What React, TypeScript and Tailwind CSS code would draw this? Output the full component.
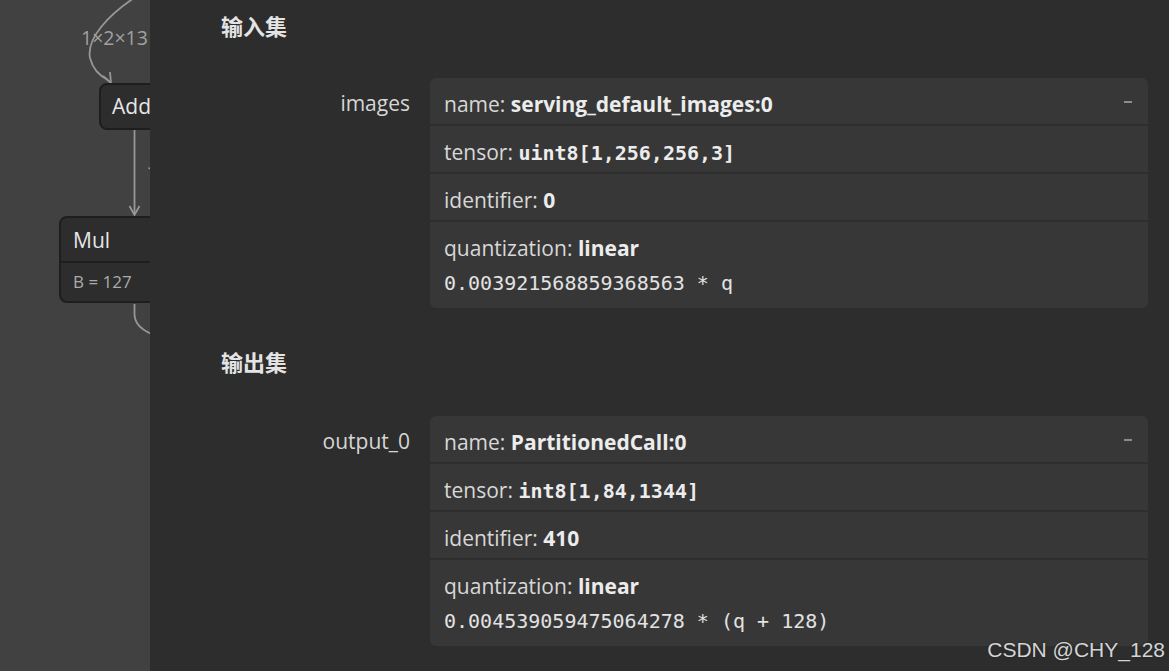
const sans = { fontFamily: '"Open Sans", "Noto Sans", sans-serif' };
const mono = { fontFamily: '"DejaVu Sans Mono", "Liberation Mono", monospace' };
const cjk = { fontFamily: '"Noto Sans CJK SC", sans-serif' };

type Row = { key: string; value: string; mono?: boolean; extra?: string };

const inputs: Row[] = [
  { key: 'name', value: 'serving_default_images:0' },
  { key: 'tensor', value: 'uint8[1,256,256,3]', mono: true },
  { key: 'identifier', value: '0' },
  { key: 'quantization', value: 'linear', extra: '0.003921568859368563 * q' },
];

const outputs: Row[] = [
  { key: 'name', value: 'PartitionedCall:0' },
  { key: 'tensor', value: 'int8[1,84,1344]', mono: true },
  { key: 'identifier', value: '410' },
  { key: 'quantization', value: 'linear', extra: '0.004539059475064278 * (q + 128)' },
];

function Card({ label, rows }: { label: string; rows: Row[] }) {
  return (
    <div className="flex">
      <div className="w-[189px] shrink-0 pt-[13px] text-right text-[21px] leading-6 text-[#d6d6d6]">{label}</div>
      <div className="relative ml-5 flex-1 overflow-hidden rounded-[6px] bg-[#373737]">
        {/* collapse toggle */}
        <span className="absolute right-4 top-[23px] h-[2px] w-[8px] bg-[#8c8c8c]" />
        {rows.map((r, i) => (
          <div
            key={r.key}
            className={`px-[14px] pt-[14px] ${i < rows.length - 1 ? 'h-[48px] border-b-2 border-[#2e2e2e]' : 'h-[86px]'}`}
          >
            <div className="text-[21px] leading-6 text-[#d8d8d8]">
              {r.key}:{' '}
              <span
                className={`font-bold text-[#ececec] ${r.mono ? 'text-[20px]' : ''}`}
                style={r.mono ? mono : undefined}
              >
                {r.value}
              </span>
            </div>
            {r.extra && (
              <div className="mt-2 text-[20px] leading-[30px] text-[#e2e2e2]" style={mono}>
                {r.extra}
              </div>
            )}
          </div>
        ))}
      </div>
    </div>
  );
}

function Graph() {
  return (
    <div className="relative h-full w-[150px] shrink-0 overflow-hidden bg-[#414141]">
      <svg className="absolute left-0 top-0" width="150" height="671">
        <g fill="none" stroke="#979797" strokeWidth="1.8">
          <path d="M134 -2 C110 14 86 38 90 58 C93 70 100 76 108 80" />
          <path d="M103 76 L111 83 L110 72" />
          <path d="M134.5 130 L134.5 214" />
          <path d="M129.5 206 L134.5 215 L139.5 206" />
          <path d="M134.5 304 L134.5 314 C134.5 324 142 330 152 334" />
          {/* clipped edge label */}
          <path d="M148.5 168.5 L150 168" />
        </g>
      </svg>
      <span className="absolute left-[81px] top-[27px] whitespace-nowrap text-[19.5px] leading-[22px] text-[#a0a0a0]">
        1×2×13
      </span>
      <div className="absolute left-[99px] top-[83px] h-[47px] w-[120px] rounded-[8px] border-2 border-[#1e1e1e] bg-[#2d2d2d] pl-[11px] text-[21px] leading-[43px] text-[#e6e6e6]">
        Add
      </div>
      <div className="absolute left-[59px] top-[216px] w-[150px] rounded-[8px] border-2 border-[#1e1e1e] bg-[#2d2d2d]">
        <div className="h-[45px] border-b-2 border-[#1e1e1e] pl-3 text-[21px] leading-[45px] text-[#e6e6e6]">Mul</div>
        <div className="h-[38px] pl-3 text-[17px] leading-[38px] text-[#ababab]">B = 127</div>
      </div>
    </div>
  );
}

export default function App() {
  return (
    <div className="relative flex h-[671px] w-[1169px] overflow-hidden" style={sans}>
      <Graph />
      <div className="flex-1 bg-[#2d2d2d] pl-[71px] pr-[21px]">
        <h2 className="h-[50px] text-[22px] font-bold leading-[50px] text-[#e4e4e4]" style={cjk}>
          输入集
        </h2>
        <div className="mt-[28px]">
          <Card label="images" rows={inputs} />
        </div>
        <h2 className="mt-[28px] h-[50px] text-[22px] font-bold leading-[50px] text-[#e4e4e4]" style={cjk}>
          输出集
        </h2>
        <div className="mt-[30px]">
          <Card label="output_0" rows={outputs} />
        </div>
      </div>
      <span
        className="absolute right-[4px] top-[636px] text-[21px] leading-[28px] text-[#d4d4d4]"
        style={{ fontFamily: '"Liberation Sans", Arial, sans-serif', textShadow: '0 0 2px #222' }}
      >
        CSDN @CHY_128
      </span>
    </div>
  );
}
